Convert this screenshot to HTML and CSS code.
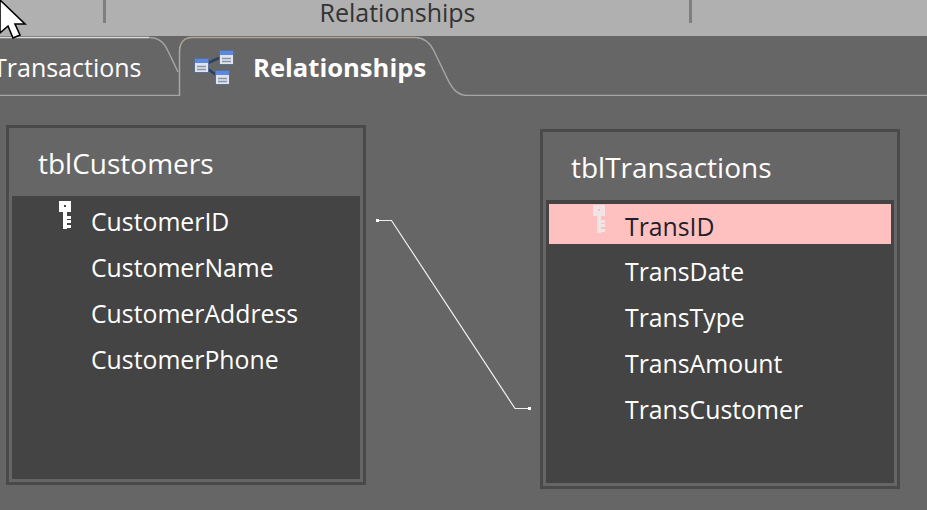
FILE: index.html
```html
<!DOCTYPE html>
<html lang="en">
<head>
<meta charset="utf-8">
<title>Relationships</title>
<link rel="stylesheet" href="styles.css">
</head>
<body>
<div class="app">
  <header class="titlebar">
    <div class="cell cell-a"></div>
    <div class="cell cell-b">Relationships</div>
    <div class="cell cell-c"></div>
  </header>
  <nav class="tabs">
    <svg class="tabline" width="927" height="60" viewBox="0 0 927 60">
      <path class="edge-bright" d="M0 1.5H149"/>
      <path class="edge-dim" d="M149 1.5C160 1.5 165 8 168 15L178 36"/>
      <path class="edge-dim" d="M0 59.5H179.5V16C179.5 7 184 1.5 192 1.5H415C424 1.5 430 7 434 15L448 44C453 54 458 59 467 59.5H927"/>
      <path class="edge-warm" d="M179.5 58V16C179.5 7 184 1.5 192 1.5H415"/>
    </svg>
    <span class="tab-label tab-inactive">Transactions</span>
    <svg class="tab-icon" width="48" height="38" viewBox="0 0 48 38">
      <path class="rel-link" d="M15 15L26 10M15 21L23 27"/>
      <g class="mini">
        <rect x="1.5" y="10.5" width="14" height="14"/><rect class="mini-head" x="2" y="11" width="13" height="4"/><path d="M4 18.5H13M4 21.5H13"/>
      </g>
      <g class="mini">
        <rect x="26.5" y="2.5" width="14" height="14"/><rect class="mini-head" x="27" y="3" width="13" height="4"/><path d="M29 10.5H38M29 13.5H38"/>
      </g>
      <g class="mini">
        <rect x="22.5" y="22.5" width="14" height="14"/><rect class="mini-head" x="23" y="23" width="13" height="4"/><path d="M25 30.5H34M25 33.5H34"/>
      </g>
    </svg>
    <span class="tab-label tab-active">Relationships</span>
  </nav>
  <main class="canvas">
    <section class="win win-customers">
      <h2 class="win-title">tblCustomers</h2>
      <ul class="fields">
        <li class="field"><svg class="key" width="12" height="28" viewBox="0 0 12 28"><path fill-rule="evenodd" d="M0 0H12V11H8V28H4V11H0ZM5 4V6H7V4Z"/><path d="M8 15H12V18H8ZM8 19H12V22H8ZM8 24H12V27H8Z"/></svg>CustomerID</li>
        <li class="field">CustomerName</li>
        <li class="field">CustomerAddress</li>
        <li class="field">CustomerPhone</li>
      </ul>
    </section>
    <section class="win win-transactions">
      <h2 class="win-title">tblTransactions</h2>
      <ul class="fields">
        <li class="field selected"><svg class="key" width="12" height="28" viewBox="0 0 12 28"><path fill-rule="evenodd" d="M0 0H12V11H8V28H4V11H0ZM5 4V6H7V4Z"/><path d="M8 15H12V18H8ZM8 19H12V22H8ZM8 24H12V27H8Z"/></svg>TransID</li>
        <li class="field">TransDate</li>
        <li class="field">TransType</li>
        <li class="field">TransAmount</li>
        <li class="field">TransCustomer</li>
      </ul>
    </section>
    <svg class="link" width="160" height="196" viewBox="0 0 160 196">
      <path d="M1 1.5H15.5L139 189.5H154"/>
      <rect x="0" y="0" width="3" height="3"/>
      <rect x="152" y="188" width="3" height="3"/>
    </svg>
  </main>
  <svg class="cursor" width="28" height="42" viewBox="-1 -1 28 42">
    <path d="M0 0L25 24H15L20 35L13 38L8 26L0 33Z"/>
  </svg>
</div>
</body>
</html>
```
FILE: styles.css
```css
* { box-sizing: border-box; margin: 0; padding: 0; }
html, body { width: 927px; height: 510px; overflow: hidden; background: #666; }
body { font-family: "Open Sans", "Noto Sans", sans-serif; }
.app { position: relative; width: 927px; height: 510px; overflow: hidden; }

.titlebar { display: grid; grid-template-columns: 106px 586px 1fr; height: 36px; background: #b0b0b0; }
.cell { position: relative; }
.cell-a::after, .cell-b::after { content: ""; position: absolute; right: 0; top: 0; width: 3px; height: 23px; background: #7f7f7f; }
.cell-b { font-size: 25px; line-height: 25px; color: #333; text-align: center; padding-right: 3px; }

.tabs { position: relative; display: flex; align-items: center; height: 60px; }
.tabline { position: absolute; left: 0; top: 0; }
.edge-bright { fill: none; stroke: #dcdcdc; stroke-width: 1.5; }
.edge-dim { fill: none; stroke: #a5a5a5; stroke-width: 1.5; }
.edge-warm { fill: none; stroke: #b5a590; stroke-width: 1; }
.tab-label { position: relative; margin-top: 2px; font-size: 25px; color: #fff; white-space: nowrap; }
.tab-inactive { margin-left: -7px; width: 200px; flex: none; }
.tab-active { margin-left: 12px; font-size: 25.6px; font-weight: 700; }
.tab-icon { position: relative; flex: none; margin-top: 2px; }
.rel-link { fill: none; stroke: #2a4060; stroke-width: 2.5; }
.mini rect { fill: #dfe4ee; stroke: #5a6f95; }
.mini .mini-head { fill: #5b88e0; stroke: none; }
.mini path { fill: none; stroke: #8c94a4; stroke-width: 1.5; }

.canvas { position: relative; height: 414px; }
.win { position: absolute; display: flex; flex-direction: column; width: 360px; height: 360px; border: 3px solid #4a4a4a; padding: 3px; background: #666; }
.win-customers { left: 6px; top: 29px; }
.win-transactions { left: 540px; top: 33px; }
.win-title { height: 65px; padding: 13px 0 0 26px; font-size: 28px; line-height: 38px; font-weight: 400; color: #fff; }
.win-transactions .win-title { padding-left: 25px; }
.fields { flex: 1; list-style: none; background: #444; }
.win-customers .fields { padding-top: 2px; }
.win-transactions .fields { padding: 4px 3px 0; }
.field { position: relative; height: 46px; line-height: 46px; padding-left: 79px; font-size: 24.8px; color: #fff; }
.win-transactions .field { padding-left: 76px; }
.field.selected { height: 40px; margin-bottom: 4px; line-height: 44px; background: #ffc0c0; color: #1f1f2a; }
.key { position: absolute; left: 47px; top: 3px; fill: #fff; }
.win-transactions .key { left: 44px; top: 1px; fill: #f0e4e4; }

.link { position: absolute; left: 376px; top: 123px; }
.link path { fill: none; stroke: #f0f0f0; stroke-width: 1.2; }
.link rect { fill: #fff; }

.cursor { position: absolute; left: -1px; top: -1px; }
.cursor path { fill: #fff; stroke: #000; stroke-width: 1.6; }
```
